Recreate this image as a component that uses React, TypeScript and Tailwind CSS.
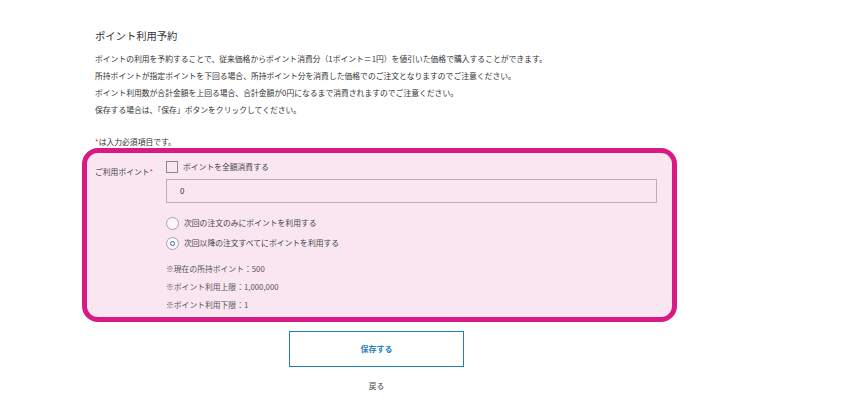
export default function App() {
  const notes = [
    "※現在の所持ポイント：500",
    "※ポイント利用上限：1,000,000",
    "※ポイント利用下限：1",
  ];

  return (
    <main
      className="w-[850px] h-[408px] bg-white text-[#333] overflow-hidden"
      style={{ fontFamily: '"Noto Sans CJK JP", "Noto Sans", sans-serif' }}
    >
      <div className="ml-[82px] w-[595px] pt-[28px]">
        <h1 className="pl-[13px] text-[10.3px] leading-[16px] text-[#333]">ポイント利用予約</h1>

        <div className="pl-[13px] mt-[6px] text-[7.8px] leading-[17px] text-[#333]">
          <p>ポイントの利用を予約することで、従来価格からポイント消費分（1ポイント＝1円）を値引いた価格で購入することができます。</p>
          <p>所持ポイントが指定ポイントを下回る場合、所持ポイント分を消費した価格でのご注文となりますのでご注意ください。</p>
          <p>ポイント利用数が合計金額を上回る場合、合計金額が0円になるまで消費されますのでご注意ください。</p>
          <p>保存する場合は、「保存」ボタンをクリックしてください。</p>
        </div>

        <p className="pl-[13px] mt-[15px] text-[7.8px] leading-[17px] text-[#333]">
          <span className="text-[#e53935]">*</span>は入力必須項目です。
        </p>

        <section className="mt-[-2px] border-[5px] border-[#d81b84] bg-[#fae6f1] rounded-[16px] flex">
          <div className="w-[79px] pl-[8px] pt-[14px] text-[7.8px] leading-[10px] text-[#444]">
            ご利用ポイント<span className="text-[#e53935]">*</span>
          </div>

          <div className="flex-1 pr-[15px] pt-[8px] pb-[3px]">
            <label className="flex items-center h-[12px] gap-[5px] text-[7.8px] text-[#444]">
              <span className="w-[12px] h-[12px] border border-[#8a8a8a] bg-transparent" />
              ポイントを全額消費する
            </label>

            <div className="mt-[6px] h-[24px] border border-[#c4a9b8] flex items-center pl-[13px] text-[7.8px] text-[#333]">
              0
            </div>

            <div className="mt-[10px]">
              <label className="flex items-center h-[20px] gap-[5px] text-[7.8px] text-[#444]">
                <span className="w-[13px] h-[13px] rounded-full border border-[#a8a0a6] bg-[#fdf5f9]" />
                次回の注文のみにポイントを利用する
              </label>
              <label className="flex items-center h-[20px] gap-[5px] text-[7.8px] text-[#444]">
                <span className="w-[13px] h-[13px] rounded-full border border-[#a8a0a6] bg-[#fdf5f9] flex items-center justify-center">
                  <span className="w-[5px] h-[5px] rounded-full border border-[#2b6fc4]" />
                </span>
                次回以降の注文すべてにポイントを利用する
              </label>
            </div>

            <div className="mt-[7px] text-[7.8px] text-[#555]">
              {notes.map((n) => (
                <p key={n} className="h-[18px] leading-[18px]">
                  {n}
                </p>
              ))}
            </div>
          </div>
        </section>

        <div className="ml-[207px] w-[175px] mt-[9px] flex flex-col items-center">
          <button className="w-[175px] h-[36px] border border-[#1f7cc4] bg-white text-[#2a7fc0] text-[8px] font-bold">
            保存する
          </button>
          <a className="mt-[12px] text-[7.8px] text-[#444] leading-[14px]">戻る</a>
        </div>
      </div>
    </main>
  );
}
